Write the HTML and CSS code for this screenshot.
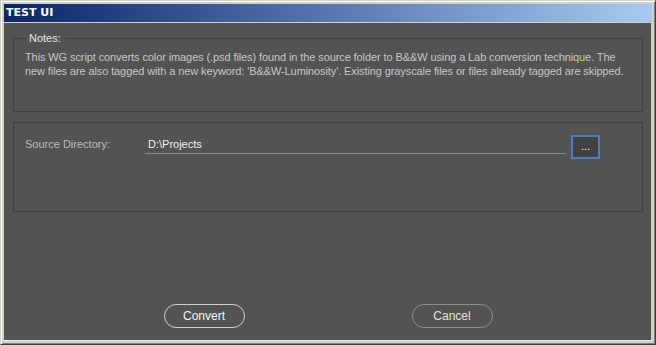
FILE: index.html
```html
<!DOCTYPE html>
<html lang="en">
<head>
    <meta charset="UTF-8">
    <meta name="viewport" content="width=device-width, initial-scale=1.0">
    <title>TEST UI</title>
    <link rel="stylesheet" href="styles.css">
</head>
<body>
    <div class="window">
        <div class="titlebar">TEST UI</div>
        <div class="client">
            <fieldset class="panel notes">
                <legend>Notes:</legend>
                <p>This WG script converts color images (.psd files) found in the source folder to B&amp;&amp;W using a Lab conversion technique. The new files are also tagged with a new keyword: 'B&amp;&amp;W-Luminosity'. Existing grayscale files or files already tagged are skipped.</p>
            </fieldset>
            <div class="panel source">
                <div class="source-row">
                    <span class="label">Source Directory:</span>
                    <div class="path">D:\Projects</div>
                    <button class="browse">...</button>
                </div>
            </div>
            <div class="actions">
                <button class="btn primary">Convert</button>
                <button class="btn">Cancel</button>
            </div>
        </div>
    </div>
</body>
</html>
```

FILE: styles.css
```css
* {
    box-sizing: border-box;
}
body {
    margin: 0;
    padding: 0;
    width: 656px;
    height: 345px;
    overflow: hidden;
    font-family: "Liberation Sans", Arial, sans-serif;
    font-size: 11px;
    background-color: #d4d0c8;
}
.window {
    width: 656px;
    height: 345px;
    display: flex;
    flex-direction: column;
    border-top: 1px solid #d4d0c8;
    border-left: 1px solid #d4d0c8;
    border-right: 1px solid #404040;
    border-bottom: 1px solid #404040;
    box-shadow: inset 1px 1px 0 #ffffff, inset -1px -1px 0 #808080;
    padding: 3px;
    background-color: #d4d0c8;
}
.titlebar {
    height: 18px;
    line-height: 18px;
    padding-left: 2px;
    color: #fff;
    font-family: "DejaVu Sans", sans-serif;
    font-weight: bold;
    font-size: 11px;
    background: linear-gradient(to right, #0a246a, #a6caf0);
}
.client {
    flex: 1;
    margin-top: 1px;
    background-color: #535353;
    padding: 9px 8px 0 9px;
    display: flex;
    flex-direction: column;
    border-right: 1px solid #d4d0c8;
    border-bottom: 1px solid #e8e8e8;
}
.panel {
    border: 1px solid #3f3f3f;
    margin: 0;
}
.notes {
    height: 80px;
    padding: 0 10px 0 11px;
}
.notes legend {
    color: #e4e4e4;
    padding: 0 4px 0 3px;
    margin-left: 1px;
    line-height: 13px;
}
.notes p {
    margin: 5px 0 0 0;
    color: #c6c6c6;
    line-height: 14px;
    letter-spacing: -0.1px;
}
.source {
    margin-top: 10px;
    height: 90px;
    padding: 12px 0 0 11px;
}
.source-row {
    display: flex;
    align-items: flex-start;
}
.label {
    width: 120px;
    margin-top: 3px;
    line-height: 13px;
    color: #bcbcbc;
}
.path {
    width: 421px;
    height: 19px;
    padding: 3px 3px 0;
    line-height: 13px;
    color: #f2f2f2;
    border-bottom: 1px solid #8a8a8a;
}
.browse {
    margin-left: 5px;
    width: 29px;
    height: 24px;
    background-color: #424242;
    border: 2px solid #4c7dbf;
    color: #ffffff;
    font-family: "Liberation Sans", Arial, sans-serif;
    font-size: 11px;
    padding: 0 0 2px;
}
.actions {
    margin-top: 92px;
    display: flex;
    justify-content: center;
    gap: 167px;
}
.btn {
    width: 81px;
    height: 24px;
    border-radius: 12px;
    background-color: #535353;
    border: 1px solid #8c8c8c;
    color: #e0e0e0;
    font-family: "Liberation Sans", Arial, sans-serif;
    font-size: 12px;
    padding: 0;
}
.btn.primary {
    border-color: #d0d0d0;
    color: #f4f4f4;
}
```
